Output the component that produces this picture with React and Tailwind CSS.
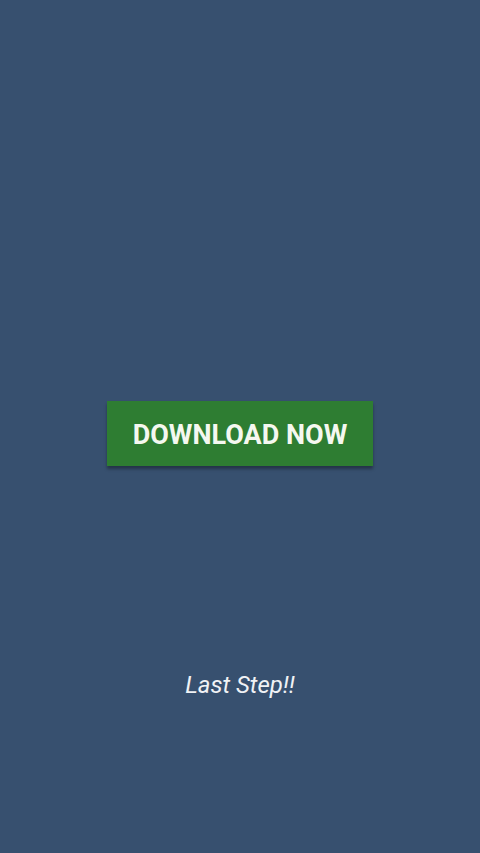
export default function App() {
  return (
    <div className="w-[480px] h-[853px] bg-[#37506f] flex flex-col items-center" style={{ fontFamily: "Roboto, 'Liberation Sans', sans-serif" }}>
      <div className="h-[401px] shrink-0" />
      <button className="w-[266px] h-[65px] bg-[#2e7d32] text-[#f5f8f0] font-bold text-[27px] leading-[32px] shadow-[0_3px_3px_rgba(0,0,0,0.35)] flex items-center justify-center pt-[3px]">
        DOWNLOAD NOW
      </button>
      <div className="h-[203px] shrink-0" />
      <p className="italic text-[24px] text-[#f0f2f5] leading-[32px]">Last Step!!</p>
    </div>
  );
}
